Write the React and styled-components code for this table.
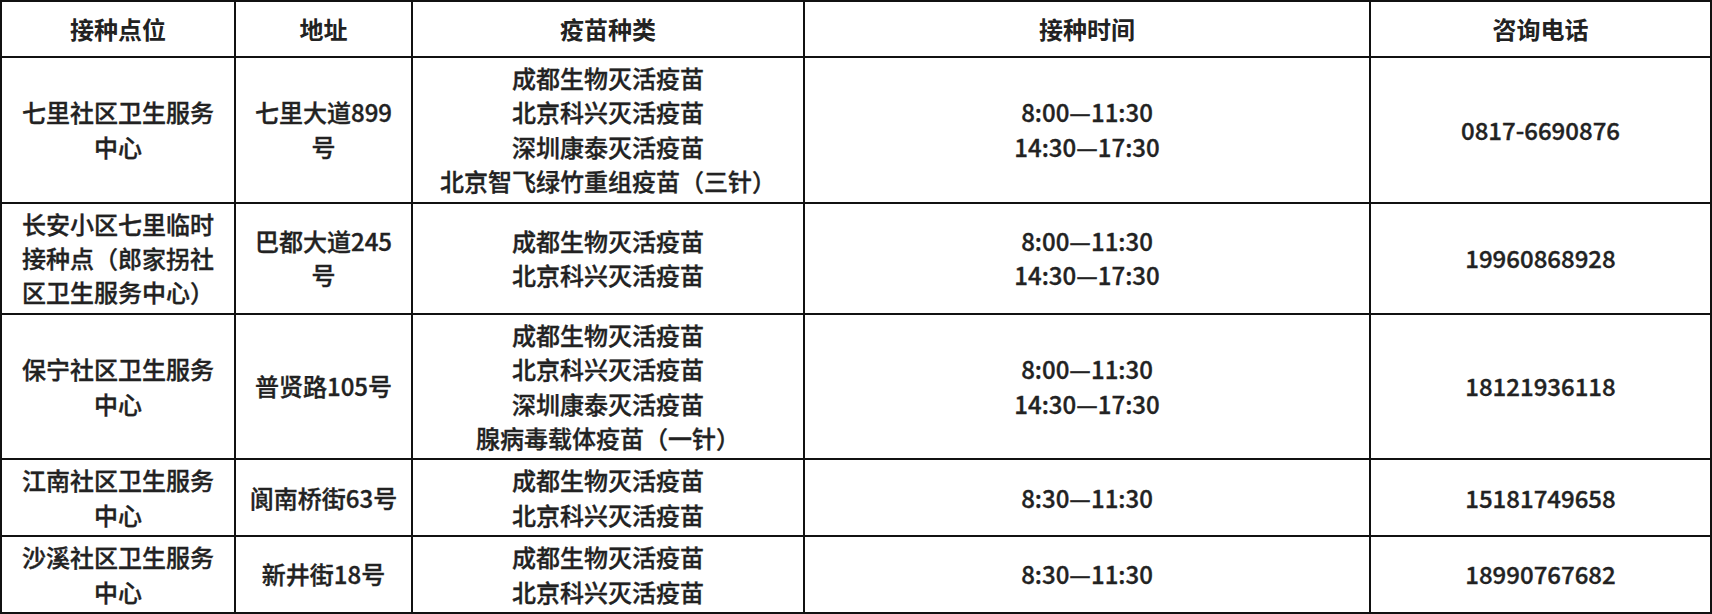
import React from "react";
import styled, { createGlobalStyle } from "styled-components";

const GlobalStyle = createGlobalStyle`
  html, body {
    margin: 0;
    padding: 0;
    background: #fff;
  }
  body {
    font-family: "Noto Sans CJK SC", "Noto Sans", sans-serif;
    color: #222;
  }
`;

const Table = styled.table`
  width: 1710px;
  border-collapse: collapse;
  table-layout: fixed;
  font-size: 24px;
  line-height: 34.4px;
`;

const Col = styled.col`
  width: ${(p) => p.$w}px;
`;

const Th = styled.th`
  border: 2px solid #111;
  padding: 9px 12px 9px;
  line-height: 36px;
  font-weight: 700;
  text-align: center;
  vertical-align: middle;
`;

const Td = styled.td`
  border: 2px solid #111;
  padding: 3px 12px;
  font-weight: 500;
  -webkit-text-stroke: 0.35px #222;
  text-align: center;
  vertical-align: middle;
`;

const Line = styled.div`
  white-space: nowrap;
`;

const columns = [
  { title: "接种点位", width: 234 },
  { title: "地址", width: 177 },
  { title: "疫苗种类", width: 392 },
  { title: "接种时间", width: 566 },
  { title: "咨询电话", width: 341 },
];

const rows = [
  {
    site: "七里社区卫生服务中心",
    address: "七里大道899号",
    vaccines: [
      "成都生物灭活疫苗",
      "北京科兴灭活疫苗",
      "深圳康泰灭活疫苗",
      "北京智飞绿竹重组疫苗（三针）",
    ],
    times: ["8:00—11:30", "14:30—17:30"],
    phone: "0817-6690876",
  },
  {
    site: "长安小区七里临时接种点（郎家拐社区卫生服务中心）",
    address: "巴都大道245号",
    vaccines: ["成都生物灭活疫苗", "北京科兴灭活疫苗"],
    times: ["8:00—11:30", "14:30—17:30"],
    phone: "19960868928",
  },
  {
    site: "保宁社区卫生服务中心",
    address: "普贤路105号",
    vaccines: [
      "成都生物灭活疫苗",
      "北京科兴灭活疫苗",
      "深圳康泰灭活疫苗",
      "腺病毒载体疫苗（一针）",
    ],
    times: ["8:00—11:30", "14:30—17:30"],
    phone: "18121936118",
  },
  {
    site: "江南社区卫生服务中心",
    address: "阆南桥街63号",
    vaccines: ["成都生物灭活疫苗", "北京科兴灭活疫苗"],
    times: ["8:30—11:30"],
    phone: "15181749658",
  },
  {
    site: "沙溪社区卫生服务中心",
    address: "新井街18号",
    vaccines: ["成都生物灭活疫苗", "北京科兴灭活疫苗"],
    times: ["8:30—11:30"],
    phone: "18990767682",
  },
];

const App = () => {
  return (
    <>
      <GlobalStyle />
      <Table>
        <colgroup>
          {columns.map((c) => (
            <Col key={c.title} $w={c.width} />
          ))}
        </colgroup>
        <thead>
          <tr>
            {columns.map((c) => (
              <Th key={c.title}>{c.title}</Th>
            ))}
          </tr>
        </thead>
        <tbody>
          {rows.map((r) => (
            <tr key={r.site}>
              <Td>{r.site}</Td>
              <Td>{r.address}</Td>
              <Td>
                {r.vaccines.map((v) => (
                  <Line key={v}>{v}</Line>
                ))}
              </Td>
              <Td>
                {r.times.map((t) => (
                  <Line key={t}>{t}</Line>
                ))}
              </Td>
              <Td>{r.phone}</Td>
            </tr>
          ))}
        </tbody>
      </Table>
    </>
  );
};

export default App;
